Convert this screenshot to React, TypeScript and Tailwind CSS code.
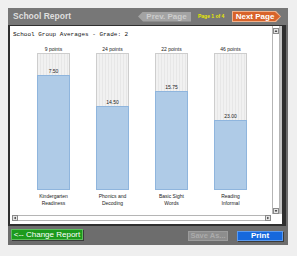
import React from 'react';

type BarData = { label: string[]; max: number; value: number };

const bars: BarData[] = [
  { label: ['Kindergarten', 'Readiness'], max: 9, value: 7.5 },
  { label: ['Phonics and', 'Decoding'], max: 24, value: 14.5 },
  { label: ['Basic Sight', 'Words'], max: 22, value: 15.75 },
  { label: ['Reading', 'Informal'], max: 46, value: 23 },
];

const BAR_INNER = 135;

const Arrow: React.FC<{ dir: 'up' | 'down' | 'left' | 'right' }> = ({ dir }) => {
  const pts = {
    up: '1,4 3,1.5 5,4',
    down: '1,2 3,4.5 5,2',
    left: '4,1 1.5,3 4,5',
    right: '2,1 4.5,3 2,5',
  }[dir];
  return (
    <div className="w-[6px] h-[6px] bg-[#e4e4e4] border border-[#8a8a8a] flex items-center justify-center">
      <svg width="6" height="6" viewBox="0 0 6 6">
        <polygon points={pts} fill="#111" />
      </svg>
    </div>
  );
};

const ChartColumn: React.FC<{ bar: BarData }> = ({ bar }) => {
  const fill = Math.round((bar.value / bar.max) * BAR_INNER);
  return (
    <div className="flex flex-col items-center">
      <div className="text-[5px] leading-[7px] text-[#222]">{bar.max} points</div>
      <div className="relative w-[33px] h-[137px] border border-[#cdcdcd] bg-[repeating-linear-gradient(90deg,#f1f1f1_0px,#f1f1f1_2px,#e7e7e7_2px,#e7e7e7_3px)]">
        <div
          className="absolute left-[-1px] right-[-1px] bottom-[-1px] bg-[#afcbe7] border border-[#8fb5dd]"
          style={{ height: fill + 2 }}
        />
        <div
          className="absolute left-0 right-0 text-center text-[5px] leading-[6px] text-[#222]"
          style={{ bottom: fill + 2 }}
        >
          {bar.value.toFixed(2)}
        </div>
      </div>
      <div className="mt-[3px] text-center text-[5px] leading-[7px] text-[#222]">
        {bar.label.map((l) => (
          <div key={l}>{l}</div>
        ))}
      </div>
    </div>
  );
};

export default function App() {
  return (
    <div className="w-[297px] h-[256px] bg-[#efefef] pt-[8px] pl-[8px] font-['Liberation_Sans',Arial,sans-serif]">
      <div className="w-[280px] h-[237px] bg-[#6d6d6d] flex flex-col">
        {/* title bar */}
        <div className="h-[17px] flex items-center bg-[#777777] pl-[5px] pr-[7px]">
          <span className="text-[8.5px] font-bold text-[#dedede]">School Report</span>
          <div className="ml-auto flex items-center">
            <div className="w-[53px] h-[10px] bg-[#a3a3a3] [clip-path:polygon(5px_0,100%_0,100%_100%,5px_100%,0_50%)] flex items-center justify-center pl-[4px] text-[8px] font-bold text-[#cdcdcd]">
              Prev. Page
            </div>
            <span className="ml-[7px] w-[28px] text-[5px] font-bold text-[#e8e800] whitespace-nowrap">Page 1 of 4</span>
            <div className="ml-[6px] w-[49px] h-[11px] bg-[#f0b08a] [clip-path:polygon(0_0,calc(100%_-_5px)_0,100%_50%,calc(100%_-_5px)_100%,0_100%)] p-[1px]">
              <div className="w-full h-full bg-[#d8632a] [clip-path:polygon(0_0,calc(100%_-_5px)_0,100%_50%,calc(100%_-_5px)_100%,0_100%)] flex items-center justify-center pr-[3px] text-[8px] font-bold text-white">
                Next Page
              </div>
            </div>
          </div>
        </div>

        {/* content */}
        <div className="h-[201px] mr-[2px] border-l-2 border-r-4 border-b-2 border-t border-[#2f2f2f] bg-white flex flex-col">
          <div className="h-[188px] flex">
            <div className="flex-1 flex flex-col">
              <div className="pt-[5px] pl-[3px] text-[6px] leading-[8px] text-[#111] font-['Liberation_Mono',monospace] whitespace-pre">
                School Group Averages - Grade: 2
              </div>
              <div className="mt-[7px] ml-[14px] grid grid-cols-[repeat(4,59px)]">
                {bars.map((b) => (
                  <ChartColumn key={b.label[0]} bar={b} />
                ))}
              </div>
            </div>
            <div className="w-[10px] flex">
              <div className="w-[8px] pt-[2px] flex flex-col items-center border-x border-[#b5b5b5]">
                <Arrow dir="up" />
                <div className="flex-1" />
                <Arrow dir="down" />
              </div>
              <div className="w-[2px] bg-[#c4c4c4]" />
            </div>
          </div>
          <div className="h-[10px] pt-[1px] pl-[2px]">
            <div className="w-[259px] h-[6px] flex items-center border-y border-[#b5b5b5]">
              <Arrow dir="left" />
              <div className="flex-1" />
              <Arrow dir="right" />
            </div>
          </div>
        </div>

        {/* bottom bar */}
        <div className="flex-1 flex items-start pl-[3px] pr-[5px]">
          <div className="mt-[3px] w-[72px] h-[11px] bg-[#1c9a1c] border border-[#5cc05c] shadow-[1px_1px_0_#3a3a3a] flex items-center justify-center text-[8px] text-white whitespace-nowrap">
            &lt;-- Change Report
          </div>
          <div className="ml-auto mt-[5px] w-[40px] h-[10px] bg-[#8d8d8d] border border-[#9c9c9c] flex items-center justify-center text-[7.5px] font-bold text-[#ababab]">
            Save As...
          </div>
          <div className="ml-[9px] mt-[5px] w-[46px] h-[10px] bg-[#1668dc] border border-[#5a9af0] shadow-[1px_1px_0_#3a3a3a] flex items-center justify-center text-[8px] font-bold text-white">
            Print
          </div>
        </div>
      </div>
    </div>
  );
}
